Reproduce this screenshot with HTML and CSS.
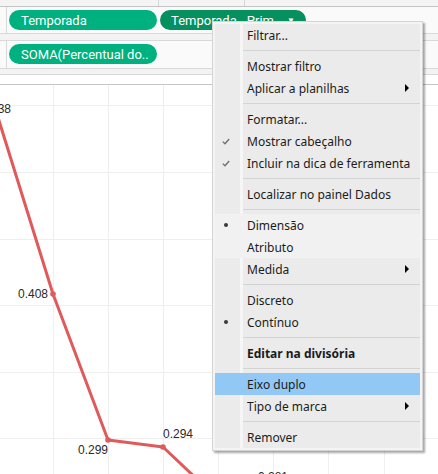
FILE: index.html
```html
<!DOCTYPE html>
<html lang="pt">
<head>
<meta charset="utf-8">
<title>Tableau menu</title>
<link rel="stylesheet" href="styles.css">
</head>
<body>
<div class="app">
  <div class="ruler"><div class="rc rc1"></div><div class="rc rc2"></div><div class="rc rc3"></div></div>
  <div class="shelf">
    <div class="shelf-label"></div>
    <div class="shelf-body">
      <span class="pill">Temporada</span>
      <span class="pill dark">Temporada - Prim <span class="caret">▼</span></span>
    </div>
  </div>
  <div class="gap"></div>
  <div class="shelf shelf2">
    <div class="shelf-label"></div>
    <div class="shelf-body">
      <span class="pill">SOMA(Percentual do..</span>
    </div>
  </div>
  <div class="gap gap2"></div>
  <div class="chart-head"></div>
  <div class="chart">
    <svg width="438" height="389" viewBox="0 0 438 389">
      <g class="grid">
        <line x1="0" y1="20.5" x2="438" y2="20.5"/>
        <line x1="0" y1="87.5" x2="438" y2="87.5"/>
        <line x1="0" y1="154.5" x2="438" y2="154.5"/>
        <line x1="0" y1="220.5" x2="438" y2="220.5"/>
        <line x1="0" y1="287.5" x2="438" y2="287.5"/>
        <line x1="0" y1="353.5" x2="438" y2="353.5"/>
        <line x1="53.5" y1="0" x2="53.5" y2="389"/>
        <line x1="108.5" y1="0" x2="108.5" y2="389"/>
        <line x1="163.5" y1="0" x2="163.5" y2="389"/>
        <line x1="218.5" y1="0" x2="218.5" y2="389"/>
        <line x1="273.5" y1="0" x2="273.5" y2="389"/>
        <line x1="328.5" y1="0" x2="328.5" y2="389"/>
        <line x1="384.5" y1="0" x2="384.5" y2="389"/>
      </g>
      <polyline class="series" points="-4,26 53,209 108,355 163,362 218,414"/>
      <g class="dots">
        <circle cx="53" cy="209" r="2.8"/>
        <circle cx="108" cy="355" r="2.8"/>
        <circle cx="163" cy="362" r="2.8"/>
      </g>
      <g class="labels">
        <text x="11" y="28" text-anchor="end">0.438</text>
        <text x="48" y="213" text-anchor="end">0.408</text>
        <text x="108" y="369" text-anchor="end">0.299</text>
        <text x="163" y="353">0.294</text>
        <text x="258" y="396">0.281</text>
      </g>
    </svg>
  </div>

  <div class="menu">
    <div class="item"><span class="mark"></span><span class="label">Filtrar...</span></div>
    <div class="sep"></div>
    <div class="item"><span class="mark"></span><span class="label">Mostrar filtro</span></div>
    <div class="item"><span class="mark"></span><span class="label">Aplicar a planilhas</span><span class="arrow"></span></div>
    <div class="sep"></div>
    <div class="item"><span class="mark"></span><span class="label">Formatar...</span></div>
    <div class="item"><span class="mark"><svg class="check" width="8" height="7" viewBox="0 0 8 7"><polyline points="0.8,3.6 3,5.8 7.2,1"/></svg></span><span class="label">Mostrar cabeçalho</span></div>
    <div class="item"><span class="mark"><svg class="check" width="8" height="7" viewBox="0 0 8 7"><polyline points="0.8,3.6 3,5.8 7.2,1"/></svg></span><span class="label">Incluir na dica de ferramenta</span></div>
    <div class="sep"></div>
    <div class="item"><span class="mark"></span><span class="label">Localizar no painel Dados</span></div>
    <div class="sep"></div>
    <div class="band">
      <div class="item"><span class="mark"><span class="bullet"></span></span><span class="label">Dimensão</span></div>
      <div class="item"><span class="mark"></span><span class="label">Atributo</span></div>
    </div>
    <div class="item"><span class="mark"></span><span class="label">Medida</span><span class="arrow"></span></div>
    <div class="sep"></div>
    <div class="item"><span class="mark"></span><span class="label">Discreto</span></div>
    <div class="item"><span class="mark"><span class="bullet"></span></span><span class="label">Contínuo</span></div>
    <div class="sep"></div>
    <div class="item bold"><span class="mark"></span><span class="label">Editar na divisória</span></div>
    <div class="sep"></div>
    <div class="item active"><span class="mark"></span><span class="label">Eixo duplo</span></div>
    <div class="item"><span class="mark"></span><span class="label">Tipo de marca</span><span class="arrow"></span></div>
    <div class="sep"></div>
    <div class="item"><span class="mark"></span><span class="label">Remover</span></div>
  </div>
</div>
</body>
</html>
```

FILE: styles.css
```css
* { box-sizing: border-box; }
html, body { margin: 0; padding: 0; }
body {
  width: 438px;
  height: 474px;
  overflow: hidden;
  background: #ffffff;
  font-family: "Liberation Sans", Arial, sans-serif;
}
.app {
  position: relative;
  width: 438px;
  height: 474px;
  background: #f7f7f7;
}
.ruler {
  display: flex;
  height: 7px;
  border-bottom: 1px solid #c4c4c4;
  background: #f4f4f4;
}
.rc { height: 6px; }
.rc1 { width: 159px; border-right: 1px solid #d6d6d6; }
.rc2 { width: 86px; border-right: 1px solid #d6d6d6; }
.rc3 { flex: 1; }

.shelf {
  display: flex;
  height: 27px;
  border-bottom: 1px solid #d9d9d9;
  background: #fafafa;
}
.shelf2 { height: 28px; }
.shelf-label {
  width: 7px;
  border-right: 1px solid #d9d9d9;
}
.shelf-body {
  display: flex;
  align-items: flex-start;
  gap: 3px;
  padding: 3px 0 0 2px;
}
.pill {
  display: flex;
  align-items: center;
  width: 148px;
  height: 20px;
  padding-left: 12px;
  border-radius: 10px;
  background: #00b180;
  color: #ffffff;
  font-family: Roboto, "Noto Sans", sans-serif;
  font-size: 13px;
  white-space: nowrap;
  overflow: hidden;
}
.pill.dark {
  width: 146px;
  background: #07905f;
  padding-left: 11px;
}
.caret {
  font-size: 8px;
  margin-left: 13px;
}
.gap {
  height: 7px;
  border-bottom: 1px solid #d9d9d9;
  background: #f3f3f3;
}
.gap2 { height: 6px; }
.chart-head {
  height: 10px;
  background: #ffffff;
  border-bottom: 1px solid #c6c6c6;
}
.chart {
  height: 389px;
  background: #ffffff;
}
.chart svg { display: block; }
.grid line { stroke: #efefef; stroke-width: 1; }
.series {
  fill: none;
  stroke: #e05a5b;
  stroke-width: 3;
  stroke-linejoin: round;
}
.dots circle { fill: #e05a5b; }
.labels text {
  font-family: "Liberation Sans", Arial, sans-serif;
  font-size: 12px;
  fill: #2a2a2a;
}

/* context menu */
.menu {
  position: absolute;
  left: 212px;
  top: 21px;
  width: 211px;
  height: 430px;
  padding: 2px;
  border: 1px solid #d4d4d4;
  background:
    linear-gradient(to right, #ebebeb 0, #ebebeb 25px, #f6f6f6 25px, #f6f6f6 28px, #ebebeb 28px) content-box,
    #f4f4f4;
  box-shadow: 2px 2px 2px rgba(0, 0, 0, 0.35);
  font-family: "Noto Sans", "Open Sans", sans-serif;
  font-size: 12px;
  color: #1b1b1b;
  display: flex;
  flex-direction: column;
}
.item {
  display: flex;
  align-items: center;
  height: 22px;
  padding-right: 11px;
  white-space: nowrap;
}
.mark {
  width: 32px;
  flex: none;
  display: flex;
  align-items: center;
  padding-left: 7px;
}
.label { flex: 1; }
.bold .label { font-weight: bold; }
.band { background: #f1f1f1; }
.active { background: #91c8f6; }
.arrow {
  width: 0;
  height: 0;
  border-left: 4px solid #000000;
  border-top: 4px solid transparent;
  border-bottom: 4px solid transparent;
}
.check polyline {
  fill: none;
  stroke: #6e6e6e;
  stroke-width: 1.3;
}
.bullet {
  display: block;
  width: 4px;
  height: 4px;
  margin-left: 2px;
  border-radius: 50%;
  background: #3a3a3a;
}
.sep {
  height: 1px;
  margin: 4px 0 4px 28px;
  background: #d3d3d3;
  flex: none;
}
```
